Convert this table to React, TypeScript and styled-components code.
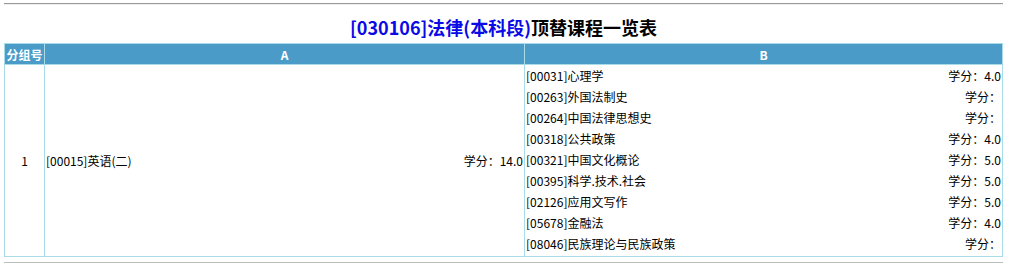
import styled, { createGlobalStyle } from 'styled-components';

const GlobalStyle = createGlobalStyle`
  body {
    margin: 0;
    background: #fff;
    font-family: "Microsoft YaHei", "Noto Sans CJK SC", sans-serif;
    font-size: 12px;
    color: #000;
  }
`

const Page = styled.div`
  padding: 3px 6px 0 4px;
`

const Rule = styled.div`
  height: 0;
  border-top: 1px solid #9a9a9a;
  border-bottom: 1px solid #eeeeee;
`

const BottomRule = styled.div`
  margin-top: 5px;
  height: 2px;
  background: #bcbcbc;
`

const Title = styled.h2`
  margin: 0;
  height: 38px;
  display: flex;
  align-items: center;
  justify-content: center;
  padding-top: 5px;
  box-sizing: border-box;
  font-size: 18px;
  font-weight: bold;
  color: #000;
`

const Major = styled.span`
  color: #0a0ae6;
`

const Table = styled.table`
  width: 999px;
  border-collapse: collapse;
  table-layout: fixed;
`

const HeadCell = styled.th<{ $w?: number }>`
  width: ${p => (p.$w ? `${p.$w}px` : 'auto')};
  height: 20px;
  padding: 0;
  background: #4a9bc8;
  color: #fff;
  font-weight: bold;
  font-size: 12px;
  text-align: center;
  border: 1px solid #a9dbe9;
`

const Cell = styled.td<{ $center?: boolean }>`
  padding: 0 1px;
  border: 1px solid #a9dbe9;
  text-align: ${p => (p.$center ? 'center' : 'left')};
  vertical-align: middle;
`

const Course = styled.div`
  display: flex;
  justify-content: space-between;
  align-items: center;
  height: 21px;
  white-space: nowrap;
`

const Sublist = styled.div`
  padding: 0 0 2px;
`

type Item = { code: string; name: string; credit: string }

const replacements: Item[] = [
  { code: '00031', name: '心理学', credit: '4.0' },
  { code: '00263', name: '外国法制史', credit: '' },
  { code: '00264', name: '中国法律思想史', credit: '' },
  { code: '00318', name: '公共政策', credit: '4.0' },
  { code: '00321', name: '中国文化概论', credit: '5.0' },
  { code: '00395', name: '科学.技术.社会', credit: '5.0' },
  { code: '02126', name: '应用文写作', credit: '5.0' },
  { code: '05678', name: '金融法', credit: '4.0' },
  { code: '08046', name: '民族理论与民族政策', credit: '' },
]

export default function App() {
  return (
    <>
      <GlobalStyle />
      <Page>
        <Rule />
        <Title>
          <Major>[030106]法律(本科段)</Major>顶替课程一览表
        </Title>
        <Table>
          <thead>
            <tr>
              <HeadCell $w={39}>分组号</HeadCell>
              <HeadCell $w={479}>A</HeadCell>
              <HeadCell>B</HeadCell>
            </tr>
          </thead>
          <tbody>
            <tr>
              <Cell $center>1</Cell>
              <Cell>
                <Course>
                  <span>[00015]英语(二)</span>
                  <span>学分：14.0</span>
                </Course>
              </Cell>
              <Cell>
                <Sublist>
                  {replacements.map(r => (
                    <Course key={r.code}>
                      <span>[{r.code}]{r.name}</span>
                      <span>学分：{r.credit}</span>
                    </Course>
                  ))}
                </Sublist>
              </Cell>
            </tr>
          </tbody>
        </Table>
        <BottomRule />
      </Page>
    </>
  )
}
